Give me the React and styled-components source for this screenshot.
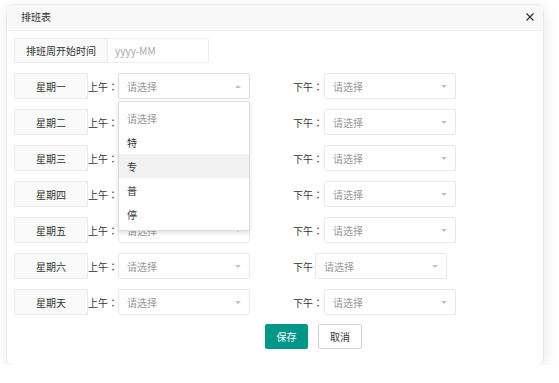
import React from "react";
import styled, { createGlobalStyle } from "styled-components";

const GlobalStyle = createGlobalStyle`
  html, body { margin: 0; padding: 0; background: #fff; }
  body {
    font-family: "Noto Sans CJK SC", "Noto Sans", sans-serif;
    font-size: 10px;
    color: #333;
  }
  * { box-sizing: border-box; }
`;

const Dialog = styled.div`
  margin: 5px 0 0 7px;
  width: 536px;
  height: 360px;
  background: #fff;
  border-radius: 6px;
  box-shadow: 0 0 0 1px rgba(0, 0, 0, 0.035), 1px 3px 16px rgba(0, 0, 0, 0.1);
  display: flex;
  flex-direction: column;
  overflow: hidden;
`;

const Header = styled.div`
  height: 26px;
  flex: none;
  background: #f8f8f8;
  border-bottom: 1px solid #eee;
  display: flex;
  align-items: center;
  justify-content: space-between;
  padding: 0 9px 2px 14px;
  color: #333;
  font-size: 10px;
`;

const CloseBtn = styled.span`
  display: flex;
  width: 9px;
  height: 9px;
  align-items: center;
  justify-content: center;
`;

const Body = styled.div`
  padding: 7px;
  display: flex;
  flex-direction: column;
`;

const TopRow = styled.div`
  display: flex;
  margin-bottom: 10px;
`;

const FieldLabel = styled.div`
  width: ${(p) => p.$w}px;
  height: ${(p) => p.$h}px;
  background: #fafafa;
  border: 1px solid #eaeaea;
  border-radius: 2px;
  display: flex;
  align-items: center;
  justify-content: center;
  color: #333;
  font-size: 10px;
  flex: none;
`;

const TextInput = styled.div`
  width: 101px;
  height: 25px;
  border: 1px solid #eee;
  border-left: none;
  border-radius: 0 2px 2px 0;
  display: flex;
  align-items: center;
  padding-left: 7px;
  color: #a9a9a9;
  font-size: 10px;
`;

const DayList = styled.div`
  display: flex;
  flex-direction: column;
  gap: 10px;
`;

const DayRow = styled.div`
  display: flex;
  align-items: center;
  height: 26px;
`;

const PeriodLabel = styled.span`
  color: #333;
  font-size: 10px;
  margin-left: ${(p) => p.$ml || 0}px;
  padding-right: ${(p) => p.$pr || 0}px;
  white-space: nowrap;
`;

const Colon = styled.span`
  font-family: "Noto Sans CJK JP", "Noto Sans CJK SC", sans-serif;
`;

const SelectWrap = styled.div`
  position: relative;
  width: 132px;
  height: 26px;
  flex: none;
`;

const SelectBox = styled.div`
  width: 100%;
  height: 100%;
  border: 1px solid ${(p) => (p.$open ? "#dcdcdc" : "#e8e8e8")};
  border-radius: 2px;
  background: #fff;
  display: flex;
  align-items: center;
  justify-content: space-between;
  padding: 0 8px 0 8px;
  color: #999;
  font-size: 10px;
`;

const Arrow = styled.span`
  width: 0;
  height: 0;
  border-left: 3px solid transparent;
  border-right: 3px solid transparent;
  ${(p) =>
    p.$up
      ? "border-bottom: 3px solid #c2c2c2;"
      : "border-top: 3px solid #c2c2c2;"}
`;

const Dropdown = styled.div`
  position: absolute;
  top: 28px;
  left: 0;
  width: 132px;
  background: #fff;
  border: 1px solid #dcdcdc;
  border-radius: 2px;
  box-shadow: 0 2px 4px rgba(0, 0, 0, 0.12);
  padding: 4px 0 4px;
  z-index: 10;
`;

const Option = styled.div`
  height: 24px;
  display: flex;
  align-items: center;
  padding-left: 8px;
  font-size: 10px;
  color: ${(p) => (p.$muted ? "#999" : "#333")};
  background: ${(p) => (p.$active ? "#f2f2f2" : "transparent")};
`;

const ButtonRow = styled.div`
  display: flex;
  gap: 10px;
  margin-top: 9px;
  padding-left: 251px;
`;

const Button = styled.button`
  width: ${(p) => p.$w}px;
  height: 25px;
  border-radius: 2px;
  font-family: inherit;
  font-size: 10px;
  padding: 0;
  display: flex;
  align-items: center;
  justify-content: center;
  cursor: pointer;
  background: ${(p) => (p.$primary ? "#009688" : "#fff")};
  color: ${(p) => (p.$primary ? "#fff" : "#333")};
  border: 1px solid ${(p) => (p.$primary ? "#009688" : "#d2d2d2")};
`;

function Select({ open, options }) {
  return (
    <SelectWrap>
      <SelectBox $open={open}>
        <span>请选择</span>
        <Arrow $up={open} />
      </SelectBox>
      {open && (
        <Dropdown>
          {options.map((o, i) => (
            <Option key={o} $muted={i === 0} $active={o === "专"}>
              {o}
            </Option>
          ))}
        </Dropdown>
      )}
    </SelectWrap>
  );
}

const days = ["星期一", "星期二", "星期三", "星期四", "星期五", "星期六", "星期天"];
const opts = ["请选择", "特", "专", "普", "停"];

export default function App() {
  return (
    <>
      <GlobalStyle />
      <Dialog>
        <Header>
          <span>排班表</span>
          <CloseBtn>
            <svg width="8" height="8" viewBox="0 0 8 8">
              <path d="M0.5 0.5 L7.5 7.5 M7.5 0.5 L0.5 7.5" stroke="#333" strokeWidth="1.2" />
            </svg>
          </CloseBtn>
        </Header>
        <Body>
          <TopRow>
            <FieldLabel $w={94} $h={25}>排班周开始时间</FieldLabel>
            <TextInput>yyyy-MM</TextInput>
          </TopRow>
          <DayList>
            {days.map((d, i) => {
              const sat = d === "星期六";
              return (
                <DayRow key={d}>
                  <FieldLabel $w={74} $h={26}>{d}</FieldLabel>
                  <PeriodLabel>
                    上午<Colon>：</Colon>
                  </PeriodLabel>
                  <Select open={i === 0} options={opts} />
                  <PeriodLabel $ml={43} $pr={sat ? 2 : 1}>
                    下午{!sat && <Colon>：</Colon>}
                  </PeriodLabel>
                  <Select options={opts} />
                </DayRow>
              );
            })}
          </DayList>
          <ButtonRow>
            <Button $primary $w={43}>保存</Button>
            <Button $w={44}>取消</Button>
          </ButtonRow>
        </Body>
      </Dialog>
    </>
  );
}
